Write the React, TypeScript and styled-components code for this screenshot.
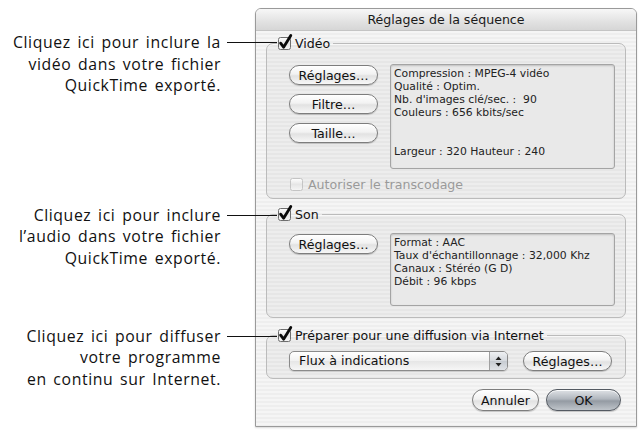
import React from "react";
import styled, { createGlobalStyle } from "styled-components";

const GlobalStyle = createGlobalStyle`
  html, body {
    margin: 0;
    padding: 0;
    background: #fff;
  }
  body {
    font-family: "DejaVu Sans", "Liberation Sans", sans-serif;
    color: #111;
  }
`;

const Page = styled.div`
  display: flex;
  align-items: flex-start;
  width: 643px;
  height: 434px;
  overflow: hidden;
`;

const Notes = styled.div`
  position: relative;
  z-index: 2;
  width: 255px;
  flex: none;
  display: flex;
  flex-direction: column;
`;

const Note = styled.div<{ $gap: number }>`
  position: relative;
  margin-top: ${(p) => p.$gap}px;
  padding-right: 34px;
  text-align: right;
  font-family: "Open Sans", "Noto Sans", sans-serif;
  font-size: 15.8px;
  line-height: 21.6px;
  letter-spacing: 0.6px;
  word-spacing: 2px;
  color: #111;
  white-space: nowrap;
`;

const Leader = styled.span`
  position: absolute;
  top: 10px;
  right: -22px;
  width: 50px;
  height: 1px;
  background: #111;
`;

const Dialog = styled.div`
  margin-top: 8px;
  width: 382px;
  height: 419px;
  box-sizing: border-box;
  border: 1px solid #9a9a9a;
  border-radius: 6px 6px 0 0;
  background: repeating-linear-gradient(
    to bottom,
    #eeeeee 0px,
    #eeeeee 2px,
    #f5f5f5 2px,
    #f5f5f5 4px
  );
  box-shadow: 0 1px 2px rgba(0, 0, 0, 0.15);
  display: flex;
  flex-direction: column;
`;

const TitleBar = styled.div`
  height: 21px;
  flex: none;
  display: flex;
  align-items: center;
  justify-content: center;
  border-radius: 5px 5px 0 0;
  border-bottom: 1px solid #c4c4c4;
  background: linear-gradient(to bottom, #f7f7f7, #e2e2e2 60%, #d6d6d6);
  font-size: 12.6px;
  color: #1a1a1a;
`;

const Body = styled.div`
  flex: 1;
  display: flex;
  flex-direction: column;
  padding: 2px 10px 0;
`;

const Group = styled.fieldset<{ $top: number; $bottom: number }>`
  margin: ${(p) => p.$top}px 0 0;
  min-width: 0;
  padding: 0 10px ${(p) => p.$bottom}px 10px;
  border: 1px solid #bbbbbb;
  border-radius: 7px;
  background: rgba(0, 0, 0, 0.03);
  box-shadow: inset 0 1px 0 rgba(255, 255, 255, 0.6);
`;

const Legend = styled.legend`
  display: flex;
  align-items: center;
  gap: 2px;
  height: 16px;
  padding: 0 3px 0 0;
  font-size: 12.6px;
  color: #111;
`;

const Content = styled.div<{ $top: number }>`
  padding: ${(p) => p.$top}px 0 0 12px;
  display: flex;
  flex-direction: column;
`;

const Row = styled.div`
  display: flex;
  align-items: flex-start;
  gap: 12px;
`;

const ButtonStack = styled.div`
  display: flex;
  flex-direction: column;
  gap: 9px;
  padding-top: 1px;
  flex: none;
`;

const PillButton = styled.button<{ $w: number; $h?: number; $default?: boolean }>`
  width: ${(p) => p.$w}px;
  height: ${(p) => p.$h ?? 20}px;
  padding: 0;
  border: 1px solid ${(p) => (p.$default ? "#545a62" : "#7d7d7d")};
  border-radius: 11px;
  font-family: "DejaVu Sans", sans-serif;
  font-size: 12.6px;
  color: #111;
  background: ${(p) =>
    p.$default
      ? "linear-gradient(to bottom, #dfe2e6 0%, #b0b6bd 45%, #949ba3 55%, #bfc4ca 100%)"
      : "linear-gradient(to bottom, #ffffff 0%, #f2f2f2 45%, #e2e2e2 55%, #f7f7f7 100%)"};
  box-shadow: 0 1px 1px rgba(0, 0, 0, 0.2), inset 0 1px 0 rgba(255, 255, 255, 0.8);
  flex: none;
`;

const InfoBox = styled.div<{ $h: number }>`
  flex: 1;
  height: ${(p) => p.$h}px;
  box-sizing: border-box;
  padding: 2px 3px;
  border: 1px solid #a4a4a4;
  border-radius: 3px;
  background: #e9e9e9;
  box-shadow: inset 0 1px 2px rgba(0, 0, 0, 0.18);
  font-size: 10.8px;
  line-height: 13px;
  color: #222;
  white-space: pre-wrap;
`;

const Option = styled.div`
  margin-top: 7px;
  display: flex;
  align-items: center;
  gap: 3px;
  height: 16px;
  font-size: 12.6px;
  color: #9a9a9a;
`;

const PopupRow = styled.div`
  display: flex;
  align-items: center;
  gap: 15px;
`;

const Popup = styled.div`
  width: 219px;
  height: 20px;
  box-sizing: border-box;
  display: flex;
  border: 1px solid #8a8a8a;
  border-radius: 5px;
  background: linear-gradient(to bottom, #ffffff, #f1f1f1 50%, #e6e6e6 51%, #f6f6f6);
  box-shadow: 0 1px 1px rgba(0, 0, 0, 0.15);
  overflow: hidden;
  font-size: 12.6px;
`;

const PopupLabel = styled.span`
  flex: 1;
  padding-left: 9px;
  line-height: 18px;
`;

const Stepper = styled.span`
  width: 17px;
  border-left: 1px solid #a0a0a0;
  display: flex;
  align-items: center;
  justify-content: center;
  background: linear-gradient(to bottom, #eef0f3, #d4d8dd 50%, #c6cbd1 51%, #e0e3e7);
`;

const Footer = styled.div`
  margin-top: 10px;
  display: flex;
  justify-content: flex-end;
  gap: 7px;
  padding-right: 5px;
`;

const Check = ({ checked, disabled }: { checked?: boolean; disabled?: boolean }) => (
  <svg width="16" height="16" viewBox="0 0 16 16" style={{ overflow: "visible", flex: "none" }}>
    <defs>
      <linearGradient id="cbg" x1="0" y1="0" x2="0" y2="1">
        <stop offset="0" stopColor="#ffffff" />
        <stop offset="0.5" stopColor="#e6e6e6" />
        <stop offset="1" stopColor="#f6f6f6" />
      </linearGradient>
    </defs>
    <rect
      x="1.5"
      y="2.5"
      width="12"
      height="12"
      rx="2"
      fill="url(#cbg)"
      stroke={disabled ? "#c4c4c4" : "#6e6e6e"}
    />
    {checked && (
      <path
        d="M3.6 8.2 L6.6 12.2 L13.8 0.4"
        fill="none"
        stroke="#0a0a0a"
        strokeWidth="2.8"
        strokeLinecap="round"
        strokeLinejoin="round"
      />
    )}
  </svg>
);

const Arrows = () => (
  <svg width="7" height="11" viewBox="0 0 7 11">
    <path d="M3.5 0.5 L6.5 4 L0.5 4 Z" fill="#222" />
    <path d="M3.5 10.5 L6.5 7 L0.5 7 Z" fill="#222" />
  </svg>
);

const videoInfo = `Compression : MPEG-4 vidéo
Qualité : Optim.
Nb. d'images clé/sec. :  90
Couleurs : 656 kbits/sec


Largeur : 320 Hauteur : 240`;

const audioInfo = `Format : AAC
Taux d'échantillonnage : 32,000 Khz
Canaux : Stéréo (G D)
Débit : 96 kbps`;

const App = () => {
  return (
    <Page>
      <GlobalStyle />
      <Notes>
        <Note $gap={32}>
          Cliquez ici pour inclure la
          <Leader />
          <br />
          vidéo dans votre fichier
          <br />
          QuickTime exporté.
        </Note>
        <Note $gap={108}>
          Cliquez ici pour inclure
          <Leader />
          <br />
          l’audio dans votre fichier
          <br />
          QuickTime exporté.
        </Note>
        <Note $gap={56}>
          Cliquez ici pour diffuser
          <Leader />
          <br />
          votre programme
          <br />
          en continu sur Internet.
        </Note>
      </Notes>

      <Dialog>
        <TitleBar>Réglages de la séquence</TitleBar>
        <Body>
          <Group $top={2} $bottom={6}>
            <Legend>
              <Check checked />
              Vidéo
            </Legend>
            <Content $top={13}>
              <Row>
                <ButtonStack>
                  <PillButton $w={89}>Réglages…</PillButton>
                  <PillButton $w={89}>Filtre…</PillButton>
                  <PillButton $w={89}>Taille…</PillButton>
                </ButtonStack>
                <InfoBox $h={105}>{videoInfo}</InfoBox>
              </Row>
              <Option>
                <Check disabled />
                Autoriser le transcodage
              </Option>
            </Content>
          </Group>

          <Group $top={7} $bottom={11}>
            <Legend>
              <Check checked />
              Son
            </Legend>
            <Content $top={11}>
              <Row>
                <ButtonStack>
                  <PillButton $w={89}>Réglages…</PillButton>
                </ButtonStack>
                <InfoBox $h={73}>{audioInfo}</InfoBox>
              </Row>
            </Content>
          </Group>

          <Group $top={9} $bottom={7}>
            <Legend>
              <Check checked />
              Préparer pour une diffusion via Internet
            </Legend>
            <Content $top={8}>
              <PopupRow>
                <Popup>
                  <PopupLabel>Flux à indications</PopupLabel>
                  <Stepper>
                    <Arrows />
                  </Stepper>
                </Popup>
                <PillButton $w={89}>Réglages…</PillButton>
              </PopupRow>
            </Content>
          </Group>

          <Footer>
            <PillButton $w={67} $h={22}>
              Annuler
            </PillButton>
            <PillButton $w={75} $h={22} $default>
              OK
            </PillButton>
          </Footer>
        </Body>
      </Dialog>
    </Page>
  );
};

export default App;
